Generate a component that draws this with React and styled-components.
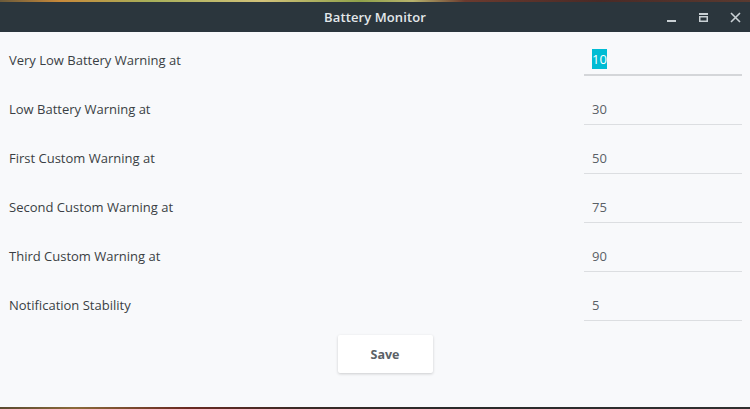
import styled, { createGlobalStyle } from 'styled-components';

const GlobalStyle = createGlobalStyle`
  html, body {
    margin: 0;
    padding: 0;
    background: #2b2522;
  }
  * {
    box-sizing: border-box;
  }
`;

const Screen = styled.div`
  width: 750px;
  height: 409px;
  display: flex;
  flex-direction: column;
  font-family: 'Open Sans', 'Noto Sans', sans-serif;
  overflow: hidden;
`;

const DesktopEdge = styled.div`
  height: ${(p) => p.h}px;
  flex-shrink: 0;
  background: ${(p) => p.bg};
`;

const TitleBar = styled.div`
  height: 30px;
  flex-shrink: 0;
  background: #2b363d;
  display: flex;
  align-items: center;
  justify-content: center;
  position: relative;
`;

const Title = styled.span`
  color: #e3e8eb;
  font-size: 13px;
  font-weight: 600;
  letter-spacing: 0.1px;
`;

const Controls = styled.div`
  position: absolute;
  right: 9px;
  top: 0;
  height: 100%;
  display: flex;
  align-items: center;
  gap: 21px;
`;

const Body = styled.div`
  flex: 1;
  background: #f8f9fb;
  padding: 12px 8px 0 9px;
  display: flex;
  flex-direction: column;
`;

const Row = styled.div`
  display: flex;
  align-items: center;
  justify-content: space-between;
  height: 32px;
  margin-bottom: 17px;
`;

const Label = styled.span`
  font-size: 13px;
  color: #3a3f44;
`;

const Field = styled.div`
  width: 158px;
  height: 32px;
  display: flex;
  align-items: center;
  padding-left: 8px;
  border-bottom: ${(p) => (p.focused ? '2px solid #d4d6d9' : '1px solid #dcdee1')};
  font-size: 13px;
  color: #5a6066;
`;

const Selected = styled.span`
  background: #00bcd4;
  color: #ffffff;
  padding: 1px 0;
  line-height: 18px;
`;

const Footer = styled.div`
  display: flex;
  justify-content: center;
  padding-left: 19px;
  margin-top: -3px;
`;

const SaveButton = styled.button`
  width: 95px;
  height: 38px;
  background: #ffffff;
  border: none;
  border-radius: 2px;
  box-shadow: 0 1px 3px rgba(0, 0, 0, 0.18);
  font-family: inherit;
  font-size: 12.5px;
  font-weight: 700;
  color: #5b6166;
`;

const fields = [
  { label: 'Very Low Battery Warning at', value: '10', focused: true },
  { label: 'Low Battery Warning at', value: '30' },
  { label: 'First Custom Warning at', value: '50' },
  { label: 'Second Custom Warning at', value: '75' },
  { label: 'Third Custom Warning at', value: '90' },
  { label: 'Notification Stability', value: '5' },
];

const App = () => {
  return (
    <>
      <GlobalStyle />
      <Screen>
        <DesktopEdge
          h={2}
          bg="linear-gradient(90deg, #6b5a3a 0%, #c98a3a 8%, #a8b05a 20%, #d2c27a 35%, #8fa14a 48%, #b7b36c 55%, #6b3a2e 62%, #4a2a26 80%, #5a3a30 100%)"
        />
        <TitleBar>
          <Title>Battery Monitor</Title>
          <Controls>
            <svg width="11" height="11" viewBox="0 0 11 11">
              <rect x="1" y="8" width="9" height="2" fill="#c9d0d4" />
            </svg>
            <svg width="11" height="11" viewBox="0 0 11 11">
              <rect x="1" y="1" width="9" height="2" fill="#c9d0d4" />
              <rect x="1.75" y="4.75" width="7.5" height="4.5" fill="none" stroke="#c9d0d4" strokeWidth="1.5" />
            </svg>
            <svg width="11" height="11" viewBox="0 0 11 11">
              <path d="M1 1 L10 10 M10 1 L1 10" stroke="#c9d0d4" strokeWidth="1.6" />
            </svg>
          </Controls>
        </TitleBar>
        <Body>
          {fields.map((f) => (
            <Row key={f.label}>
              <Label>{f.label}</Label>
              <Field focused={f.focused}>
                {f.focused ? <Selected>{f.value}</Selected> : f.value}
              </Field>
            </Row>
          ))}
          <Footer>
            <SaveButton>Save</SaveButton>
          </Footer>
        </Body>
        <DesktopEdge
          h={2}
          bg="linear-gradient(90deg, #5a4a30 0%, #8a6a3a 10%, #6a2a22 25%, #3a2a26 40%, #2a2a2a 60%, #303030 100%)"
        />
      </Screen>
    </>
  );
};

export default App;
